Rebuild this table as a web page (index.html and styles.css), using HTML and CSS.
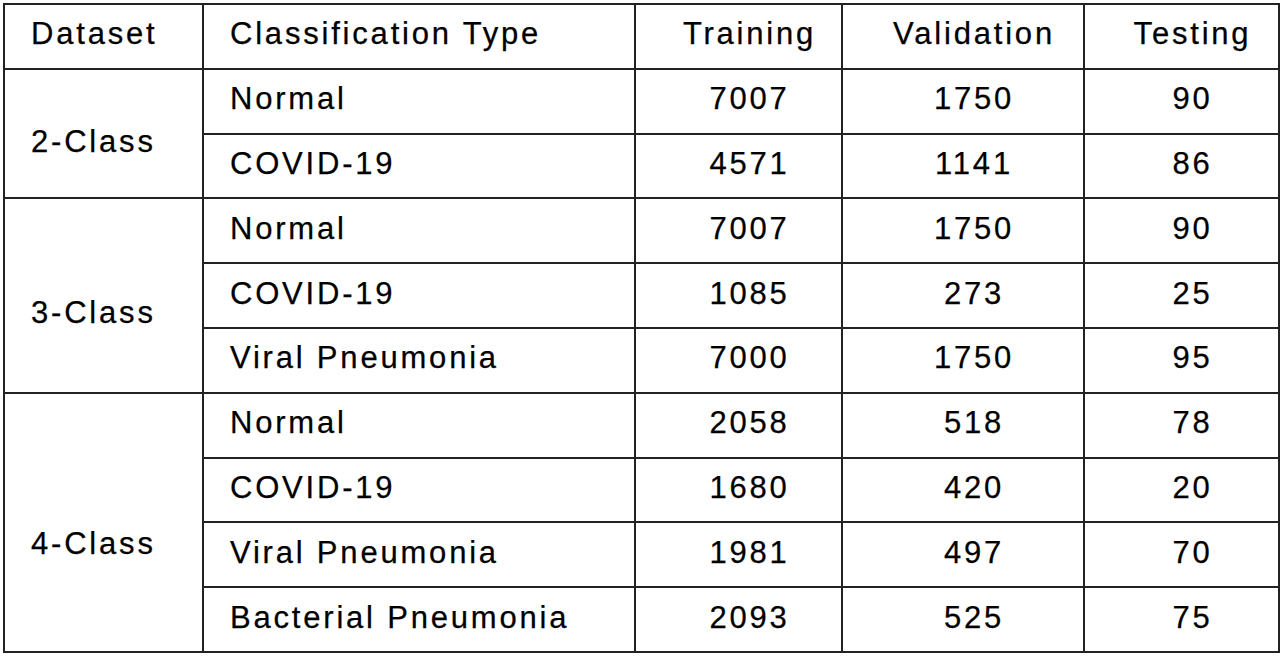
FILE: index.html
```html
<!DOCTYPE html>
<html lang="en">
<head>
<meta charset="utf-8">
<title>Dataset distribution</title>
<link rel="stylesheet" href="styles.css">
</head>
<body>
<div class="page">
<table class="data">
  <colgroup>
    <col class="c-ds"><col class="c-type"><col class="c-num1"><col class="c-num2"><col class="c-num3">
  </colgroup>
  <thead>
    <tr>
      <th class="lbl">Dataset</th>
      <th class="lbl">Classification Type</th>
      <th class="num">Training</th>
      <th class="num">Validation</th>
      <th class="num">Testing</th>
    </tr>
  </thead>
  <tbody>
    <tr><td class="lbl grp grp-2" rowspan="2">2-Class</td><td class="lbl">Normal</td><td class="num">7007</td><td class="num">1750</td><td class="num">90</td></tr>
    <tr><td class="lbl">COVID-19</td><td class="num">4571</td><td class="num">1141</td><td class="num">86</td></tr>
    <tr><td class="lbl grp grp-3" rowspan="3">3-Class</td><td class="lbl">Normal</td><td class="num">7007</td><td class="num">1750</td><td class="num">90</td></tr>
    <tr><td class="lbl">COVID-19</td><td class="num">1085</td><td class="num">273</td><td class="num">25</td></tr>
    <tr><td class="lbl">Viral Pneumonia</td><td class="num">7000</td><td class="num">1750</td><td class="num">95</td></tr>
    <tr><td class="lbl grp grp-4" rowspan="4">4-Class</td><td class="lbl">Normal</td><td class="num">2058</td><td class="num">518</td><td class="num">78</td></tr>
    <tr><td class="lbl">COVID-19</td><td class="num">1680</td><td class="num">420</td><td class="num">20</td></tr>
    <tr><td class="lbl">Viral Pneumonia</td><td class="num">1981</td><td class="num">497</td><td class="num">70</td></tr>
    <tr><td class="lbl">Bacterial Pneumonia</td><td class="num">2093</td><td class="num">525</td><td class="num">75</td></tr>
  </tbody>
</table>
</div>
</body>
</html>
```
FILE: styles.css
```css
html, body {
  margin: 0;
  padding: 0;
  background: #ffffff;
}
.page {
  padding: 3px 0 0 3px;
}
.data {
  border-collapse: collapse;
  table-layout: fixed;
  width: 1275px;
  font-family: "Liberation Sans", Arial, sans-serif;
  font-size: 31px;
  letter-spacing: 2.8px;
  color: #000000;
  -webkit-text-stroke: 0.25px #000000;
}
.c-ds { width: 199px; }
.c-type { width: 432px; }
.c-num1 { width: 207px; }
.c-num2 { width: 242px; }
.c-num3 { width: 195px; }
.data th, .data td {
  border: 2px solid #222222;
  height: 64.8px;
  padding: 0 0 4px 0;
  font-weight: normal;
  vertical-align: middle;
  white-space: nowrap;
  box-sizing: border-box;
}
.lbl {
  text-align: left;
  padding-left: 26px !important;
}
.num {
  text-align: center;
  padding-left: 22px !important;
}
.grp { padding-bottom: 0 !important; }
.grp-2 { padding-top: 16px !important; }
.grp-3 { padding-top: 34px !important; }
.grp-4 { padding-top: 44px !important; }
```
